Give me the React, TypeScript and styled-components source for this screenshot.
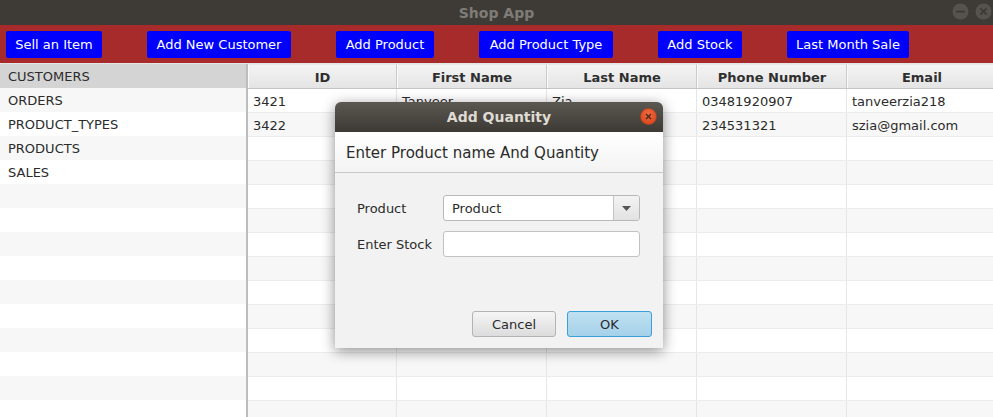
import React from "react";
import styled, { createGlobalStyle } from "styled-components";

const Global = createGlobalStyle`
  html, body { margin: 0; padding: 0; }
  body { width: 993px; height: 417px; overflow: hidden; background: #ffffff;
    font-family: "DejaVu Sans", "Liberation Sans", sans-serif; }
  * { box-sizing: border-box; }
`;

const Window = styled.div`
  position: relative;
  width: 993px;
  height: 417px;
  display: flex;
  flex-direction: column;
  overflow: hidden;
`;

const TitleBar = styled.div`
  height: 25px;
  flex: none;
  background: #3e3b37;
  display: flex;
  align-items: center;
  justify-content: center;
  position: relative;
  color: #7f7c77;
  font-weight: bold;
  font-size: 14px;
`;

const WinControls = styled.div`
  position: absolute;
  right: 0;
  top: 2px;
  display: flex;
  gap: 4px;
`;

const Toolbar = styled.div`
  height: 38px;
  flex: none;
  background: #a72b2b;
  display: flex;
  align-items: flex-start;
  padding: 6px 0 0 6px;
  gap: 45px;
`;

const BlueButton = styled.button<{ $w: number }>`
  width: ${(p) => p.$w}px;
  height: 27px;
  padding: 0;
  background: #0000ff;
  color: #ffffff;
  border: none;
  border-radius: 2px;
  font-family: "DejaVu Sans", sans-serif;
  font-size: 13px;
  line-height: 27px;
  text-align: center;
  white-space: nowrap;
`;

const Main = styled.div`
  flex: 1;
  display: flex;
  border-top: 1px solid #e4e4e4;
  min-height: 0;
`;

const SideList = styled.div`
  width: 246px;
  flex: none;
  display: flex;
  flex-direction: column;
`;

const ListRow = styled.div<{ $odd: boolean; $selected?: boolean }>`
  height: 24px;
  flex: none;
  padding-left: 8px;
  display: flex;
  align-items: center;
  font-size: 13px;
  color: #2b2b2b;
  background: ${(p) => (p.$selected ? "#d4d4d4" : p.$odd ? "#f7f7f7" : "#ffffff")};
`;

const Divider = styled.div`
  width: 2px;
  flex: none;
  background: #bdbdbd;
`;

const Table = styled.div`
  flex: 1;
  display: flex;
  flex-direction: column;
  overflow: hidden;
`;

const HeaderRow = styled.div`
  display: grid;
  grid-template-columns: 149px 150px 150px 150px 150px;
  height: 25px;
  flex: none;
  border-bottom: 1px solid #c4c4c4;
`;

const HeaderCell = styled.div`
  background: linear-gradient(#f4f4f4, #e4e4e4);
  border-right: 1px solid #cacaca;
  border-top: 1px solid #e8e8e8;
  border-left: 1px solid #fafafa;
  display: flex;
  align-items: center;
  justify-content: center;
  padding-top: 2px;
  font-weight: bold;
  font-size: 13px;
  color: #2f2f2f;
`;

const BodyRow = styled.div<{ $odd: boolean }>`
  display: grid;
  grid-template-columns: 149px 150px 150px 150px 150px;
  height: 24px;
  flex: none;
  background: ${(p) => (p.$odd ? "#f7f7f7" : "#ffffff")};
  border-bottom: 1px solid #ececec;
`;

const Cell = styled.div`
  border-right: 1px solid #e6e6e6;
  padding: 2px 0 0 5px;
  display: flex;
  align-items: center;
  font-size: 13px;
  color: #2b2b2b;
  white-space: nowrap;
  overflow: hidden;
`;

/* Dialog */
const Dialog = styled.div`
  position: absolute;
  left: 335px;
  top: 102px;
  width: 328px;
  height: 246px;
  display: flex;
  flex-direction: column;
  border-radius: 6px 6px 0 0;
  background: #f2f2f2;
  box-shadow: 0 3px 14px rgba(0, 0, 0, 0.45);
  overflow: hidden;
`;

const DialogTitle = styled.div`
  height: 30px;
  flex: none;
  position: relative;
  background: linear-gradient(#5b5751, #3d3a35);
  display: flex;
  align-items: center;
  justify-content: center;
  color: #dfdbd2;
  font-weight: bold;
  font-size: 14px;
`;

const CloseDot = styled.div`
  position: absolute;
  right: 6px;
  top: 6px;
  width: 17px;
  height: 17px;
  display: flex;
`;

const DialogHeader = styled.div`
  height: 41px;
  flex: none;
  padding: 1px 0 0 11px;
  display: flex;
  align-items: center;
  font-size: 15px;
  color: #2b2b2b;
  background: linear-gradient(#ffffff, #f3f3f3);
  border-bottom: 1px solid #c8c8c8;
`;

const Form = styled.div`
  display: grid;
  grid-template-columns: 86px 197px;
  row-gap: 10px;
  padding: 22px 0 0 22px;
  align-items: center;
`;

const FieldLabel = styled.div`
  font-size: 13px;
  color: #2b2b2b;
  padding-top: 1px;
`;

const Combo = styled.div`
  height: 26px;
  display: flex;
  border: 1px solid #b8b8b8;
  border-radius: 3px;
  background: #ffffff;
  overflow: hidden;
`;

const ComboText = styled.div`
  flex: 1;
  padding: 1px 0 0 8px;
  display: flex;
  align-items: center;
  font-size: 13px;
  color: #2b2b2b;
`;

const ComboArrow = styled.div`
  width: 26px;
  flex: none;
  border-left: 1px solid #c4c4c4;
  background: linear-gradient(#f3f3f3, #e2e2e2);
  display: flex;
  align-items: center;
  justify-content: center;
`;

const TextField = styled.div`
  height: 26px;
  border: 1px solid #c2c2c2;
  border-radius: 3px;
  background: #ffffff;
`;

const ButtonBar = styled.div`
  margin-top: auto;
  display: flex;
  justify-content: flex-end;
  gap: 11px;
  padding: 0 11px 11px 0;
`;

const DlgButton = styled.button<{ $primary?: boolean }>`
  width: ${(p) => (p.$primary ? "85px" : "84px")};
  height: 26px;
  border-radius: 3px;
  font-family: "DejaVu Sans", sans-serif;
  font-size: 13px;
  color: #2b2b2b;
  padding: 1px 0 0;
  border: 1px solid ${(p) => (p.$primary ? "#3b9fd8" : "#b3b3b3")};
  background: ${(p) =>
    p.$primary
      ? "linear-gradient(#bfe0f1, #a5d1e9)"
      : "linear-gradient(#f5f5f5, #dcdcdc)"};
`;

const listItems = [
  "CUSTOMERS",
  "ORDERS",
  "PRODUCT_TYPES",
  "PRODUCTS",
  "SALES",
];

const columns = ["ID", "First Name", "Last Name", "Phone Number", "Email"];
const rows = [
  ["3421", "Tanveer", "Zia", "03481920907", "tanveerzia218"],
  ["3422", "Saad", "Zia", "234531321", "szia@gmail.com"],
];

const toolbarButtons: [string, number][] = [
  ["Sell an Item", 96],
  ["Add New Customer", 144],
  ["Add Product", 98],
  ["Add Product Type", 134],
  ["Add Stock", 84],
  ["Last Month Sale", 122],
];

export default function App() {
  const listRows = Array.from({ length: 15 }, (_, i) => listItems[i] ?? "");
  const bodyRows = Array.from({ length: 14 }, (_, i) => rows[i] ?? ["", "", "", "", ""]);
  return (
    <>
      <Global />
      <Window>
        <TitleBar>
          Shop App
          <WinControls>
            <svg width="19" height="19" viewBox="0 0 19 19">
              <circle cx="9.5" cy="9.5" r="8" fill="#56534e" />
              <rect x="5" y="8.7" width="9" height="1.8" fill="#3b3935" />
            </svg>
            <svg width="19" height="19" viewBox="0 0 19 19">
              <circle cx="9.5" cy="9.5" r="8" fill="#56534e" />
              <path d="M6.3 6.3 L12.7 12.7 M12.7 6.3 L6.3 12.7" stroke="#3b3935" strokeWidth="1.8" />
            </svg>
          </WinControls>
        </TitleBar>
        <Toolbar>
          {toolbarButtons.map(([b, w]) => (
            <BlueButton key={b} $w={w}>
              {b}
            </BlueButton>
          ))}
        </Toolbar>
        <Main>
          <SideList>
            {listRows.map((t, i) => (
              <ListRow key={i} $odd={i % 2 === 1} $selected={i === 0}>
                {t}
              </ListRow>
            ))}
          </SideList>
          <Divider />
          <Table>
            <HeaderRow>
              {columns.map((c) => (
                <HeaderCell key={c}>{c}</HeaderCell>
              ))}
            </HeaderRow>
            {bodyRows.map((r, i) => (
              <BodyRow key={i} $odd={i % 2 === 1}>
                {r.map((c, j) => (
                  <Cell key={j}>{c}</Cell>
                ))}
              </BodyRow>
            ))}
          </Table>
        </Main>

        <Dialog>
          <DialogTitle>
            Add Quantity
            <CloseDot>
              <svg width="17" height="17" viewBox="0 0 17 17">
                <defs>
                  <radialGradient id="cg" cx="50%" cy="35%" r="65%">
                    <stop offset="0%" stopColor="#f26a3f" />
                    <stop offset="100%" stopColor="#d9471e" />
                  </radialGradient>
                </defs>
                <circle cx="8.5" cy="8.5" r="8" fill="url(#cg)" stroke="#b8401d" strokeWidth="0.6" />
                <path d="M6 6 L11 11 M11 6 L6 11" stroke="#4a2a1e" strokeWidth="1.4" />
              </svg>
            </CloseDot>
          </DialogTitle>
          <DialogHeader>Enter Product name And Quantity</DialogHeader>
          <Form>
            <FieldLabel>Product</FieldLabel>
            <Combo>
              <ComboText>Product</ComboText>
              <ComboArrow>
                <svg width="9" height="5" viewBox="0 0 9 5">
                  <path d="M0 0 L9 0 L4.5 5 Z" fill="#555555" />
                </svg>
              </ComboArrow>
            </Combo>
            <FieldLabel>Enter Stock</FieldLabel>
            <TextField />
          </Form>
          <ButtonBar>
            <DlgButton>Cancel</DlgButton>
            <DlgButton $primary>OK</DlgButton>
          </ButtonBar>
        </Dialog>
      </Window>
    </>
  );
}
